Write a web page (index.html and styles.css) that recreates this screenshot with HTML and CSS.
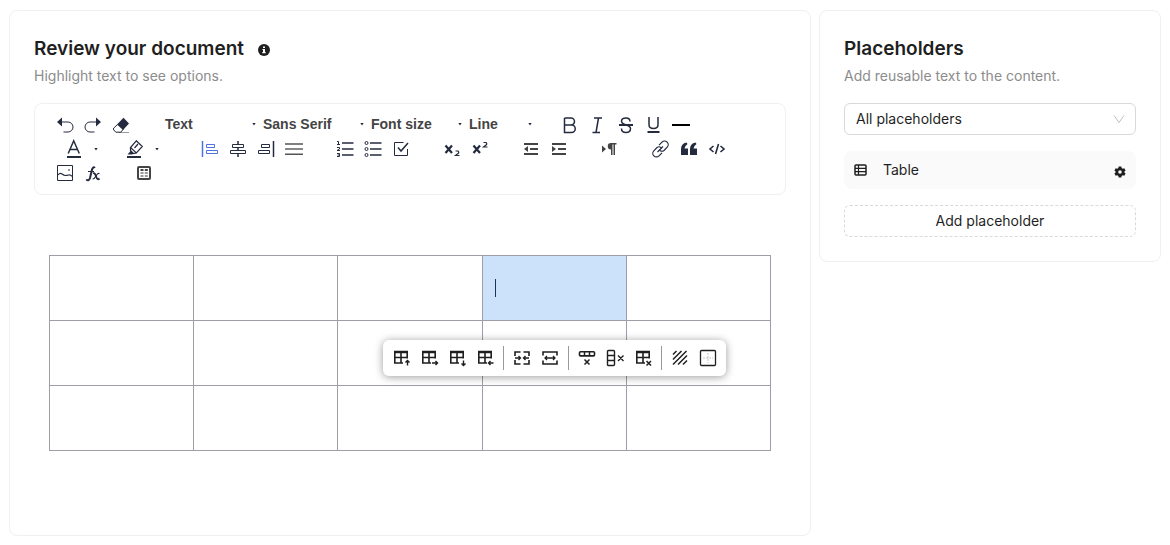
FILE: index.html
```html
<!DOCTYPE html>
<html lang="en">
<head>
<meta charset="utf-8">
<meta name="viewport" content="width=device-width, initial-scale=1">
<title>Review your document</title>
<link rel="stylesheet" href="styles.css">
</head>
<body>
<svg class="sprite" aria-hidden="true">
  <symbol id="grid-corner" viewBox="0 0 18 18">
    <path d="M2 3h14" stroke-width="2.500"/>
    <path d="M2.800 2v12H11M15.200 2v7.500M2 8.500h14M9 2v12" stroke-width="1.600"/>
  </symbol>
</svg>
<main class="page">
  <section class="card">
    <header class="card-head">
      <div class="title-row">
        <h1 class="title">Review your document</h1>
        <svg class="info" viewBox="0 0 12 12" role="img" aria-label="Information"><circle cx="6" cy="6" r="6" fill="#1f1f1f"/><path d="M5 2.500h2v1.500H5zM4.500 5H7v3h.7v1.200H4.300V8H5V6h-.5z" fill="#fff"/></svg>
      </div>
      <p class="subtitle">Highlight text to see options.</p>
    </header>

    <div class="toolbar" role="toolbar" aria-label="Formatting">
      <div class="group">
        <button class="tool" aria-label="Undo"><svg viewBox="0 0 18 18"><path class="solid" d="M1 6l5-4.500v9z"/><path d="M6 6h6a5 5 0 0 1 0 10H7.500"/></svg></button>
        <button class="tool" aria-label="Redo"><svg viewBox="0 0 18 18"><path class="solid" d="M17 6l-5-4.500v9z"/><path d="M12 6H6a5 5 0 0 0 0 10h4.500"/></svg></button>
        <button class="tool" aria-label="Clear formatting"><svg viewBox="0 0 18 18"><path stroke="#999" d="M7 16.500h10"/><path class="solid" d="M11.500 1.800L17 7.500l-6 6.500-6-5.500z"/><path d="M5.500 8.500L1.800 12q-1 1 0 2l2 2.200h5L11.500 13"/></svg></button>
      </div>
      <div class="group">
        <button class="picker">Text<span class="caret"></span></button>
        <button class="picker wide">Sans Serif<span class="caret"></span></button>
        <button class="picker">Font size<span class="caret"></span></button>
        <button class="picker short">Line<span class="caret"></span></button>
      </div>
      <div class="group">
        <button class="tool" aria-label="Bold"><svg viewBox="0 0 18 18"><path stroke-width="1.500" d="M4.500 2v14.500h7a3.600 3.600 0 0 0 0-7.500h-7M4.500 2H11a3.500 3.500 0 0 1 0 7"/></svg></button>
        <button class="tool" aria-label="Italic"><svg viewBox="0 0 18 18"><path stroke-width="1.500" d="M6 2h8M4.500 16.500H12M10.500 2L8 16.500"/></svg></button>
        <button class="tool" aria-label="Strikethrough"><svg viewBox="0 0 18 18"><path stroke-width="1.500" d="M14 5.500C14 3 12.500 2 10 2S5.500 3.200 5.500 5.200C5.500 9.500 14.500 8 14.500 12.500c0 2.500-2 4-4.500 4s-4.500-1.500-4.500-4"/><path stroke-width="2" d="M3 9h14"/></svg></button>
        <button class="tool" aria-label="Underline"><svg viewBox="0 0 18 18"><path stroke-width="1.500" d="M5 1v7.500q0 4 4.500 4t4.500-4V1"/><path stroke-width="2" d="M3.500 16h12"/></svg></button>
        <button class="tool" aria-label="Divider"><svg viewBox="0 0 18 18"><path stroke="#000" stroke-width="2" d="M0 9h18"/></svg></button>
      </div>
      <div class="group">
        <button class="color-picker" aria-label="Text color"><svg viewBox="0 0 18 18"><path stroke-width="1.500" d="M3.200 13.500L8.700.8l5.600 12.700M5 9.500h7.500"/><path stroke-width="2" d="M2 17h14"/></svg><span class="caret"></span></button>
        <button class="color-picker" aria-label="Highlight color"><svg viewBox="0 0 18 18"><path stroke-width="1.200" d="M10.300.8l6 5.700-6 6.500-5.800-5.500zM4.500 7.500v3.200l2.800 2.800 3-.5M12 4L8.500 8"/><path class="solid" d="M1.500 14.500L5 10.500l3 3-2 1z"/><path stroke-width="2" d="M1 17h14"/></svg><span class="caret"></span></button>
      </div>
      <div class="group">
        <button class="tool active" aria-label="Align left"><svg viewBox="0 0 18 18"><path stroke-width="1.500" d="M1.500 1v16"/><path d="M5.500 4.500h8v3h-8zM5.500 10.500h11v3h-11z"/></svg></button>
        <button class="tool" aria-label="Align center"><svg viewBox="0 0 18 18"><path stroke-width="1.500" d="M9 1v3.500M9 7.500v3M9 13.500V17"/><path d="M3.500 4.500h11v3h-11zM1.500 10.500h15v3h-15z"/></svg></button>
        <button class="tool" aria-label="Align right"><svg viewBox="0 0 18 18"><path stroke-width="1.500" d="M16.500 1v16"/><path d="M4.500 4.500h8v3h-8zM1.500 10.500h11v3h-11z"/></svg></button>
        <button class="tool" aria-label="Justify"><svg viewBox="0 0 18 18"><path stroke="#555" stroke-width="1.500" d="M0 4h18M0 14.300h18"/><path stroke="#888" stroke-width="2" d="M0 9h18"/></svg></button>
      </div>
      <div class="group">
        <button class="tool" aria-label="Numbered list"><svg viewBox="0 0 18 18"><path stroke-width="1.500" d="M6 3h11.500M6 9h11.500M6 15h11.500"/><path d="M1 1.500h1.500v3M1 4.500h3M1 7.500h2.500v1.500L1 10.500h3M1 13.500h2.500v3H1M1.500 15h2"/></svg></button>
        <button class="tool" aria-label="Bulleted list"><svg viewBox="0 0 18 18"><path stroke-width="1.500" d="M6 3h11.500M6 9h11.500M6 15h11.500"/><circle cx="2.500" cy="3" r="1.500"/><circle cx="2.500" cy="9" r="1.500"/><circle cx="2.500" cy="15" r="1.500"/></svg></button>
        <button class="tool" aria-label="Checklist"><svg viewBox="0 0 18 18"><path d="M11.500 2.500h-9v13h13V9"/><path stroke-width="1.500" d="M6 7.500L9 11l7-8"/></svg></button>
      </div>
      <div class="group">
        <button class="tool" aria-label="Subscript"><svg viewBox="0 0 18 18"><path stroke-width="2.200" d="M2.500 5.500l6.500 7.500M9 5.500L2.500 13"/><path stroke-width="1.200" d="M12.500 11h2.500q1.500 1.500 0 2.500L12.500 15.500h4"/></svg></button>
        <button class="tool" aria-label="Superscript"><svg viewBox="0 0 18 18"><path stroke-width="2.200" d="M2.500 5.500l6.500 7.500M9 5.500L2.500 13"/><path stroke-width="1.200" d="M12.500 2.500h2.500q1.500 1.500 0 2.500L12.500 7h4"/></svg></button>
      </div>
      <div class="group">
        <button class="tool gray" aria-label="Decrease indent"><svg viewBox="0 0 18 18"><path stroke-width="2" d="M2 4h14M8 9h8M2 14h14"/><path class="solid" d="M2 9l4-3v6z"/></svg></button>
        <button class="tool gray" aria-label="Increase indent"><svg viewBox="0 0 18 18"><path stroke-width="2" d="M2 4h14M8 9h8M2 14h14"/><path class="solid" d="M6 9L2 6v6z"/></svg></button>
      </div>
      <div class="group">
        <button class="tool gray" aria-label="Text direction"><svg viewBox="0 0 18 18"><path class="solid" d="M5 9L1 5.500v7zM10 3h5.500v1.500H14V15h-1.500V4.500h-1V15H10V9.500a3.200 3.200 0 0 1 0-6.500z"/></svg></button>
      </div>
      <div class="group">
        <button class="tool" aria-label="Link"><svg viewBox="0 0 18 18"><path stroke-width="1.200" d="M7 5.200L10 2.200a3.600 3.600 0 0 1 5.200 5L12 10.500q-2 1.500-4 0M10 12.800l-3 3a3.600 3.600 0 0 1-5.200-5L5 7.500q2-1.500 4 0M5.500 12l5.500-5.500"/></svg></button>
        <button class="tool" aria-label="Blockquote"><svg viewBox="0 0 18 18"><path class="solid" d="M1 15V9q0-5.500 5.500-6.500l1 1.500Q5 5.500 4.500 8.500H8V15zM10 15V9q0-5.500 5.500-6.500l1 1.500Q14 5.500 13.500 8.500H17V15z"/></svg></button>
        <button class="tool" aria-label="Code block"><svg viewBox="0 0 18 18"><path stroke-width="1.600" d="M5.500 6L2 9l3.500 3M12.500 6L16 9l-3.500 3M10.500 4l-3 10"/></svg></button>
      </div>
      <div class="group">
        <button class="tool" aria-label="Image"><svg viewBox="0 0 18 18"><path d="M1.500 1.500h15v15h-15z"/><path stroke-width="1.200" d="M2 11q2-2.500 4-1t3.500 1.500 3-.5 4 1.500"/><path stroke="#999" stroke-width="2" d="M12 6h2"/></svg></button>
        <button class="tool" aria-label="Formula"><svg viewBox="0 0 18 18"><path stroke-width="2" d="M10.800 4Q9.500 2 8 5.500L6 14q-1 3.500-3.800 1.500"/><path stroke-width="1.200" d="M4 7.500h6M15.500 9.500q-2-.5-3.500 2.500t-3.500 3"/><path stroke-width="1.800" d="M9 9.500q1.500-1 2.500 1.500l1.500 3.500q1 1.500 2.500 0"/></svg></button>
      </div>
      <div class="group">
        <button class="tool gray" aria-label="Insert table"><svg viewBox="0 0 18 18"><rect x="3" y="3" width="12" height="12" rx="1" stroke-width="2"/><path stroke-width="2" d="M5.500 6h3M9.800 6h3"/><path stroke="#999" stroke-width="2" d="M5.500 9h3M9.800 9h3M5.500 12h3M9.800 12h3"/></svg></button>
      </div>
    </div>

    <div class="editor">
      <table class="doc-table" aria-label="Document table">
        <tbody>
          <tr><td></td><td></td><td></td>
            <td class="selected"><span class="cursor"></span>
              <div class="table-menu" role="toolbar" aria-label="Table">
                <button class="tool" aria-label="Insert row above"><svg viewBox="0 0 18 18"><use href="#grid-corner"/><path stroke-width="1.400" d="M15.500 16.500V11.500M13.500 13.500l2-2 2 2"/></svg></button>
                <button class="tool" aria-label="Insert column right"><svg viewBox="0 0 18 18"><use href="#grid-corner"/><path stroke-width="1.400" d="M12 14h5.500M15.500 12l2 2-2 2"/></svg></button>
                <button class="tool" aria-label="Insert row below"><svg viewBox="0 0 18 18"><use href="#grid-corner"/><path stroke-width="1.400" d="M15.500 11.500v5M13.500 14.500l2 2 2-2"/></svg></button>
                <button class="tool" aria-label="Insert column left"><svg viewBox="0 0 18 18"><use href="#grid-corner"/><path stroke-width="1.400" d="M17.500 14H12.500M14.500 12l-2 2 2 2"/></svg></button>
                <span class="divider"></span>
                <button class="tool" aria-label="Merge cells"><svg viewBox="0 0 18 18"><path stroke-width="1.600" d="M7.500 3H2v4M10.500 3H16v4M7.500 15H2v-4M10.500 15H16v-4"/><path stroke-width="1.300" d="M2 9h5M5.500 7l2 2-2 2M16 9h-5M12.500 7l-2 2 2 2"/></svg></button>
                <button class="tool" aria-label="Split cell"><svg viewBox="0 0 18 18"><path stroke-width="1.600" d="M2 6.500V3h14v3.500M2 11.500V15h14v-3.500"/><path stroke-width="1.300" d="M4 9h10M6 7L4 9l2 2M12 7l2 2-2 2"/></svg></button>
                <span class="divider"></span>
                <button class="tool" aria-label="Delete row"><svg viewBox="0 0 18 18"><rect x="1.500" y="2.700" width="15" height="4.200" rx="1" stroke-width="1.600"/><path stroke-width="1.500" d="M6.500 3v4M11.500 3v4M6.500 10.500l5 5M11.500 10.500l-5 5"/></svg></button>
                <button class="tool" aria-label="Delete column"><svg viewBox="0 0 18 18"><rect x="1.500" y="1.500" width="7" height="15" rx="1" stroke-width="1.400"/><path stroke-width="1.400" d="M2 6.500h6M2 11.500h6M12 6.500l5.500 5.500M17.500 6.500L12 12"/></svg></button>
                <button class="tool" aria-label="Delete table"><svg viewBox="0 0 18 18"><use href="#grid-corner"/><path stroke-width="1.500" d="M12.500 12l4.500 4.500M17 12l-4.500 4.500"/></svg></button>
                <span class="divider"></span>
                <button class="tool" aria-label="Cell background"><svg viewBox="0 0 18 18"><path stroke-width="1.500" d="M2 5.500l3.500-3.500M2 10.500L10.500 2M2 15.500L15.500 2M7 15.500L16 6.500M12 15.500l4-4"/></svg></button>
                <button class="tool" aria-label="Cell borders"><svg viewBox="0 0 18 18"><rect x="1.500" y="1.500" width="15" height="15" rx="1" stroke-width="1.300"/><path stroke="#888" stroke-dasharray="1 2" d="M4.500 9h9.500M9 4.500V14"/></svg></button>
              </div>
            </td><td></td></tr>
          <tr><td></td><td></td><td></td><td></td><td></td></tr>
          <tr><td></td><td></td><td></td><td></td><td></td></tr>
        </tbody>
      </table>
    </div>
  </section>

  <aside class="card">
    <header class="card-head">
      <h2 class="title">Placeholders</h2>
      <p class="subtitle">Add reusable text to the content.</p>
    </header>
    <div class="stack">
      <div class="select-wrap">
        <select class="select" aria-label="Filter placeholders"><option>All placeholders</option></select>
        <svg class="chevron" viewBox="0 0 12 12" aria-hidden="true"><path d="M1 2.500l5 7 5-7" fill="none" stroke="#bfbfbf"/></svg>
      </div>
      <div class="item">
        <svg class="item-icon" viewBox="0 0 14 12" aria-hidden="true"><rect x="1" y="1" width="11" height="10" rx="1" fill="none" stroke="#1f1f1f" stroke-width="1.500"/><path d="M4.500 1v10M1 4.400h11M1 7.700h11" fill="none" stroke="#1f1f1f" stroke-width="1.200"/></svg>
        <span class="item-name">Table</span>
        <button class="gear" aria-label="Placeholder settings"><svg viewBox="0 0 12 12"><path fill="#1f1f1f" fill-rule="evenodd" d="M4.700.5h2.600l.4 1.600 1 .6 1.600-.5 1.300 2.200L10.400 5.600v.8l1.200 1.200-1.300 2.200-1.600-.5-1 .6-.4 1.600H4.700l-.4-1.600-1-.6-1.600.5L.4 7.600l1.200-1.200v-.8L.4 4.400l1.300-2.200 1.600.5 1-.6zM6 4.200a1.800 1.800 0 1 0 0 3.600 1.800 1.800 0 0 0 0-3.600z"/></svg></button>
      </div>
      <button class="add">Add placeholder</button>
    </div>
  </aside>
</main>
</body>
</html>
```
FILE: styles.css
```css
* {
  box-sizing: border-box;
}

body {
  margin: 0;
  background: #fff;
  color: #1f1f1f;
  font: 14px/22px Inter, "Liberation Sans", sans-serif;
}

button {
  margin: 0;
  padding: 0;
  border: 0;
  background: none;
  color: inherit;
  font: inherit;
  cursor: pointer;
}

.sprite {
  position: absolute;
  width: 0;
  height: 0;
}

.page {
  display: grid;
  grid-template-columns: minmax(0, 1fr) 342px;
  align-items: start;
  gap: 8px;
  padding: 10px 9px 9px;
}

.card {
  padding: 24px;
  border: 1px solid #f0f0f0;
  border-radius: 8px;
}

.card-head {
  margin-bottom: 16px;
}

.title-row {
  display: flex;
  align-items: center;
  gap: 14px;
}

.title {
  margin: 0;
  font-size: 19px;
  font-weight: 600;
  line-height: 28px;
}

.info {
  width: 12px;
  height: 12px;
  margin-top: 2px;
}

.subtitle {
  margin: 2px 0 0;
  color: #8c8c8c;
}

.toolbar {
  display: flex;
  flex-wrap: wrap;
  column-gap: 23px;
  padding: 9px 16px 9px;
  border: 1px solid #f0f0f0;
  border-radius: 8px;
  color: #252b3f;
}

.group {
  display: flex;
}

.tool {
  display: flex;
  align-items: center;
  justify-content: center;
  width: 28px;
  height: 24px;
}

.tool svg,
.color-picker svg {
  width: 18px;
  height: 18px;
  fill: none;
  stroke: currentColor;
  overflow: visible;
}

.tool .solid,
.color-picker .solid {
  fill: currentColor;
  stroke: none;
}

.active {
  color: #4d72e0;
}

.gray {
  color: #444;
}

.picker {
  display: flex;
  align-items: center;
  justify-content: space-between;
  width: 98px;
  height: 24px;
  padding: 0 0 2px 7px;
  color: #444;
  font-family: "Liberation Sans", Arial, sans-serif;
  font-weight: 700;
}

.picker.wide {
  width: 108px;
}

.picker.short {
  width: 70px;
}

.caret {
  width: 4px;
  height: 3px;
  background: #252b3f;
  clip-path: polygon(0 0, 100% 0, 50% 100%);
}

.color-picker {
  display: flex;
  align-items: center;
  justify-content: space-between;
  width: 61px;
  height: 24px;
  padding: 0 14px;
}

.editor {
  min-height: 316px;
  padding: 60px 15px 0;
}

.doc-table {
  width: 100%;
  border-collapse: collapse;
  table-layout: fixed;
}

.doc-table td {
  height: 65px;
  padding: 0 12px;
  border: 1px solid #9e9ea8;
}

.doc-table .selected {
  position: relative;
  background: #cce2fb;
}

.cursor {
  display: block;
  width: 1px;
  height: 18px;
  background: #1c3556;
}

.table-menu {
  position: absolute;
  top: 84px;
  left: calc(50% - 171px);
  z-index: 1;
  display: flex;
  align-items: center;
  height: 36px;
  padding: 0 4px;
  border-radius: 6px;
  background: #fff;
  box-shadow: 0 1px 8px rgba(0, 0, 0, 0.4);
}

.divider {
  width: 1px;
  height: 24px;
  margin: 0 4px;
  background: #999;
}

.stack {
  display: grid;
  gap: 16px;
}

.select-wrap {
  position: relative;
}

.select {
  display: block;
  width: 100%;
  height: 32px;
  padding: 0 11px;
  border: 1px solid #d9d9d9;
  border-radius: 6px;
  background: #fff;
  color: inherit;
  font: inherit;
  appearance: none;
}

.chevron {
  position: absolute;
  top: 10px;
  right: 11px;
  width: 12px;
  height: 12px;
  pointer-events: none;
}

.item {
  display: flex;
  align-items: center;
  height: 38px;
  padding: 0 10px;
  border-radius: 8px;
  background: #fafafa;
}

.item-icon {
  width: 14px;
  height: 12px;
}

.item-name {
  flex: 1;
  margin-left: 15px;
}

.gear {
  display: flex;
  padding-top: 4px;
}

.gear svg {
  width: 12px;
  height: 12px;
}

.add {
  height: 32px;
  border: 1px dashed #d9d9d9;
  border-radius: 6px;
}
```
